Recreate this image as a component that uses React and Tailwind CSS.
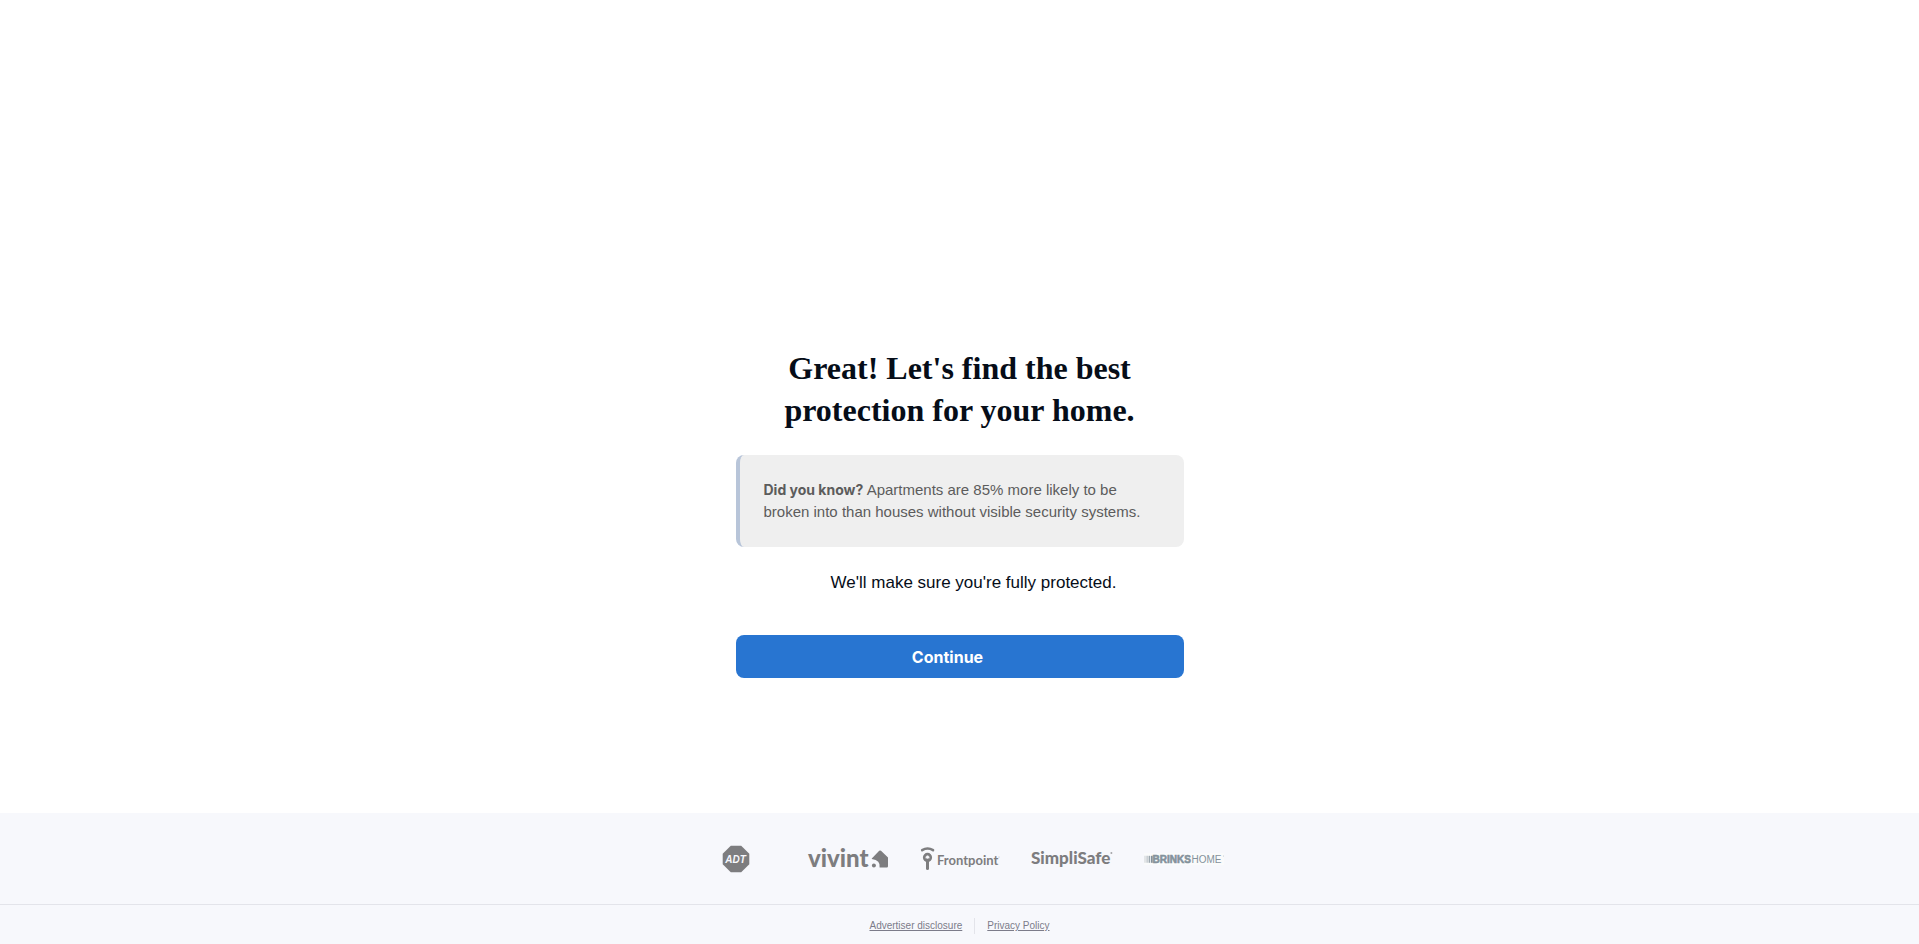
function AdtLogo() {
  return (
    <svg viewBox="0 0 28 28" className="size-7" role="img" aria-label="ADT">
      <path d="M8.800 .7h10.400L27.300 8.800v10.400L19.200 27.300H8.800L.7 19.200V8.800z" fill="#7d7d7f" />
      <text
        x="13.600"
        y="17.600"
        textAnchor="middle"
        fontFamily="Liberation Sans, sans-serif"
        fontSize="10"
        fontWeight="700"
        fontStyle="italic"
        fill="#f7f8fc"
      >
        ADT
      </text>
    </svg>
  );
}

function VivintLogo() {
  return (
    <svg viewBox="0 0 80 32" className="h-8 w-20 overflow-visible" role="img" aria-label="vivint">
      <text x="0" y="24" fontFamily="Lato, sans-serif" fontSize="24" fontWeight="900" fill="#7d7d7f">
        vivint
      </text>
      <circle cx="65.900" cy="22.400" r="2" fill="#7d7d7f" />
      <path
        d="M63.800 15.400 71.200 7.800q.9-.8 1.800 0l7 6.800v8.600q0 1.200-1.200 1.200h-7.200q1.200-7-7.800-8.400z"
        fill="#7d7d7f"
      />
    </svg>
  );
}

function FrontpointLogo() {
  return (
    <svg viewBox="0 0 80 28" className="h-7 w-20 overflow-visible" role="img" aria-label="Frontpoint">
      <path d="M2.200 5.200Q7.600 1.800 13 5.200" fill="none" stroke="#7d7d7f" strokeWidth="2.600" strokeLinecap="round" />
      <circle cx="7.500" cy="12.400" r="3.300" fill="none" stroke="#7d7d7f" strokeWidth="2.600" />
      <path d="M7.500 12.400v11" stroke="#7d7d7f" strokeWidth="3" strokeLinecap="round" />
      <circle cx="7.500" cy="12.200" r="1.500" fill="#f7f8fc" />
      <text x="17" y="20" fontFamily="Lato, sans-serif" fontSize="13" fontWeight="700" fill="#7d7d7f">
        Frontpoint
      </text>
      <circle cx="79" cy="12" r="0.500" fill="#a3a4a8" />
    </svg>
  );
}

function SimpliSafeLogo() {
  return (
    <svg viewBox="0 0 80 28" className="h-7 w-20 overflow-visible" role="img" aria-label="SimpliSafe">
      <text x="-1" y="18.500" fontFamily="Lato, sans-serif" fontSize="17" fontWeight="900" fill="#7d7d7f">
        SimpliSafe
      </text>
      <circle cx="79.400" cy="8" r="1" fill="#a3a4a8" />
    </svg>
  );
}

function BrinksLogo() {
  return (
    <svg viewBox="0 0 80 28" className="h-7 w-20" role="img" aria-label="Brinks Home">
      <path d="M0 8h80v12H0z" fill="#fafbfb" />
      <path d="M.5 10.800h1v7h-1z" fill="#c9cfd3" />
      <path d="M2.500 10.800h1.200v7H2.500z" fill="#b3bcc2" />
      <path d="M4.600 10.800h1.500v7H4.600z" fill="#9ba7af" />
      <path d="M6.900 10.800h1.800v7H6.900z" fill="#84929c" />
      <text
        x="8.500"
        y="17.800"
        fontFamily="Liberation Sans, sans-serif"
        fontSize="10"
        fontWeight="700"
        fill="#84929c"
        stroke="#84929c"
        strokeWidth="0.600"
      >
        BRINKS
      </text>
      <text x="47.500" y="17.800" fontFamily="Liberation Sans, sans-serif" fontSize="10" fill="#84929c">
        HOME
      </text>
      <circle cx="79.300" cy="11" r="0.400" fill="#84929c" />
    </svg>
  );
}

export default function App() {
  return (
    <div className="flex min-h-screen flex-col bg-white font-['Liberation_Sans',sans-serif]">
      <main className="flex flex-1 flex-col items-center justify-end px-4 pb-[135px]">
        <div className="flex w-full max-w-[448px] flex-col">
          <h1 className="px-10 text-center font-['Liberation_Serif',serif] text-[32px] leading-[42px] font-bold text-[#060d18]">
            Great! Let's find the best protection for your home.
          </h1>
          <p className="mt-6 rounded-lg border-l-4 border-[#b8c5d9] bg-[#efefef] py-6 pr-8 pl-6 text-[15px] leading-[22px] text-[#5c5c5c]">
            <strong className="font-['Inter',sans-serif] text-[14px] leading-none font-bold">Did you know?</strong>{" "}
            Apartments are 85% more likely to be broken into than houses without visible security systems.
          </p>
          <p className="mt-6 pl-7 text-center text-[17px] leading-6 text-[#060d18]">
            We'll make sure you're fully protected.
          </p>
          <button
            type="button"
            className="mt-10 h-[43px] rounded-lg bg-[#2875d1] pr-6 text-center font-['Inter',sans-serif] text-[16px] font-bold text-white"
          >
            Continue
          </button>
        </div>
      </main>

      <footer className="bg-[#f7f8fc]">
        <div className="flex h-[92px] items-center justify-center gap-8 border-b border-[#e3e4ea]">
          <div className="flex w-20 justify-center">
            <AdtLogo />
          </div>
          <VivintLogo />
          <FrontpointLogo />
          <SimpliSafeLogo />
          <BrinksLogo />
        </div>
        <nav className="flex h-[39px] items-center justify-center pt-[3px] text-[10px] leading-4 text-[#7c7c8a]">
          <a href="#advertiser-disclosure" className="pr-3 underline">
            Advertiser disclosure
          </a>
          <a href="#privacy-policy" className="border-l border-[#e3e4ea] pl-3 underline">
            Privacy Policy
          </a>
        </nav>
      </footer>
    </div>
  );
}
